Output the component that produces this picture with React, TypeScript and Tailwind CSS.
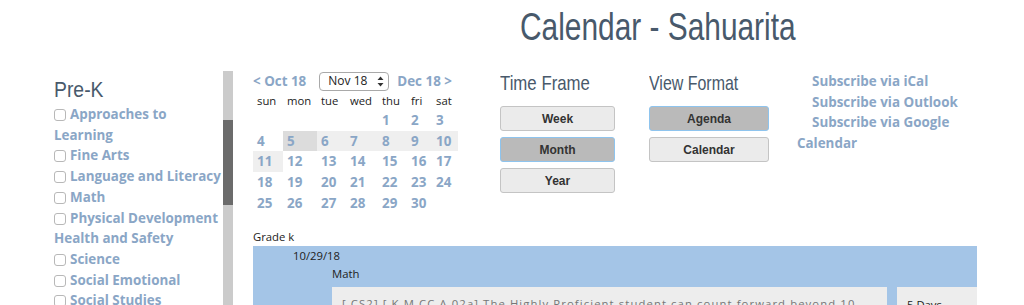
import React from 'react';

const narrow = "font-['Liberation_Sans',Arial,sans-serif] inline-block origin-left whitespace-nowrap";
const link = "font-bold text-[#8aa6c6]";

const categories: { label: string; wrap?: [string, string] }[] = [
  { label: 'Approaches to Learning', wrap: ['Approaches to', 'Learning'] },
  { label: 'Fine Arts' },
  { label: 'Language and Literacy' },
  { label: 'Math' },
  { label: 'Physical Development Health and Safety', wrap: ['Physical Development', 'Health and Safety'] },
  { label: 'Science' },
  { label: 'Social Emotional' },
  { label: 'Social Studies' },
];

const cols = ['sun', 'mon', 'tue', 'wed', 'thu', 'fri', 'sat'];
const weeks: (number | null)[][] = [
  [null, null, null, null, 1, 2, 3],
  [4, 5, 6, 7, 8, 9, 10],
  [11, 12, 13, 14, 15, 16, 17],
  [18, 19, 20, 21, 22, 23, 24],
  [25, 26, 27, 28, 29, 30, null],
];

function Box() {
  return <span className="inline-block w-[12px] h-[12px] mr-[4px] rounded-[3px] border border-[#b8b8b8] bg-white align-[-2px]" />;
}

function Btn({ label, active }: { label: string; active?: boolean }) {
  return (
    <div
      className={
        "h-[25px] flex items-center justify-center rounded-[3px] border text-[12px] font-bold text-[#333] font-['Liberation_Sans',Arial,sans-serif] " +
        (active ? 'bg-[#bababa] border-[#8ec4ee]' : 'bg-[#ebebeb] border-[#c4c4c4]')
      }
    >
      {label}
    </div>
  );
}

function MiniCalendar() {
  return (
    <div className="w-[205px]">
      <div className="h-[20px] flex items-center text-[13.4px]">
        <span className={link}>&lt; Oct 18</span>
        <div className="ml-[13px] w-[70px] h-[19px] rounded-[4px] border border-[#a9a9a9] flex items-center pl-[8px] pr-[4px] text-[12px] text-[#222]">
          <span className="flex-1">Nov 18</span>
          <svg width="7" height="11" viewBox="0 0 7 11">
            <path d="M3.5 0.5 L6.5 4 H0.5 Z M3.5 10.5 L6.5 7 H0.5 Z" fill="#333" />
          </svg>
        </div>
        <span className={link + ' ml-[8px]'}>Dec 18 &gt;</span>
      </div>
      <div className="grid grid-cols-[30px_34px_29px_32px_29px_25px_26px] text-[11.3px] text-[#222] h-[19px] leading-[19px]">
        {cols.map((c) => (
          <div key={c} className="pl-[4px]">{c}</div>
        ))}
      </div>
      {weeks.map((w, i) => (
        <div
          key={i}
          className={
            'grid grid-cols-[30px_34px_29px_32px_29px_25px_26px] h-[20.7px] leading-[20.7px] text-[13.4px] ' +
            (i === 1 ? 'bg-[#efefef]' : '')
          }
        >
          {w.map((d, j) => (
            <div
              key={j}
              className={
                'pl-[4px] ' + link + ' ' +
                (i === 1 && j === 0 ? 'bg-white ' : '') +
                (d === 5 ? 'bg-[#dcdcdc] ' : '') +
                (d === 11 ? 'bg-[#efefef] ' : '')
              }
            >
              {d ?? ''}
            </div>
          ))}
        </div>
      ))}
    </div>
  );
}

export default function App() {
  return (
    <div className="w-[1024px] h-[305px] overflow-hidden bg-white font-['Open_Sans',sans-serif]">
      <div className="h-[71px] pt-[4px] pl-[520px]">
        <h1 className={narrow + ' scale-x-[0.786] text-[38px] leading-[46px] text-[#48596b]'}>Calendar - Sahuarita</h1>
      </div>

      <div className="flex h-[234px]">
        <div className="w-[54px]" />
        <div className="w-[169px] pt-[5px] text-[13.4px] leading-[20.7px]">
          <h2 className={narrow + ' scale-x-[0.88] text-[22px] leading-[28px] text-[#48596b]'}>Pre-K</h2>
          {categories.map((c) => (
            <div key={c.label} className={link + ' whitespace-nowrap'}>
              <Box />
              {c.wrap ? (
                <>
                  {c.wrap[0]}
                  <br />
                  {c.wrap[1]}
                </>
              ) : (
                c.label
              )}
            </div>
          ))}
        </div>

        <div className="w-[10px] bg-[#cbcbcb] flex flex-col">
          <div className="h-[49px]" />
          <div className="h-[85px] bg-[#6b6b6b]" />
        </div>

        <div className="ml-[20px] flex flex-col">
          <div className="flex">
            <MiniCalendar />

            <div className="ml-[42px] w-[115px]">
              <h2 className={narrow + ' scale-x-[0.8] text-[21px] leading-[24px] text-[#48596b]'}>Time Frame</h2>
              <div className="mt-[10px] flex flex-col gap-[6px]">
                <Btn label="Week" />
                <Btn label="Month" active />
                <Btn label="Year" />
              </div>
            </div>

            <div className="ml-[34px] w-[120px]">
              <h2 className={narrow + ' scale-x-[0.76] text-[21px] leading-[24px] text-[#48596b]'}>View Format</h2>
              <div className="mt-[10px] flex flex-col gap-[6px]">
                <Btn label="Agenda" active />
                <Btn label="Calendar" />
              </div>
            </div>

            <div className={'ml-[28px] text-[13.4px] leading-[20.7px] ' + link}>
              <div className="pl-[15px]">Subscribe via iCal</div>
              <div className="pl-[15px]">Subscribe via Outlook</div>
              <div className="pl-[15px]">Subscribe via Google</div>
              <div>Calendar</div>
            </div>
          </div>

          <div className="mt-[15px] text-[11.3px] leading-[18px] text-[#222]">Grade k</div>
          <div className="w-[724px] flex-1 bg-[#a4c5e7] pt-[1px] text-[11.3px] leading-[18px] text-[#222]">
            <div className="pl-[40px]">10/29/18</div>
            <div className="pl-[79px]">Math</div>
            <div className="mt-[4px] pl-[79px] flex gap-[10px] h-full">
              <div className="w-[555px] bg-[#ededed] px-[10px] pt-[8px] text-[#777] tracking-[1.1px] whitespace-nowrap overflow-hidden">
                [ CS2] [ K.M.CC.A.02a] The Highly Proficient student can count forward beyond 10
              </div>
              <div className="flex-1 bg-[#ededed] px-[10px] pt-[9px] text-[#222]">5 Days</div>
            </div>
          </div>
        </div>
      </div>
    </div>
  );
}
